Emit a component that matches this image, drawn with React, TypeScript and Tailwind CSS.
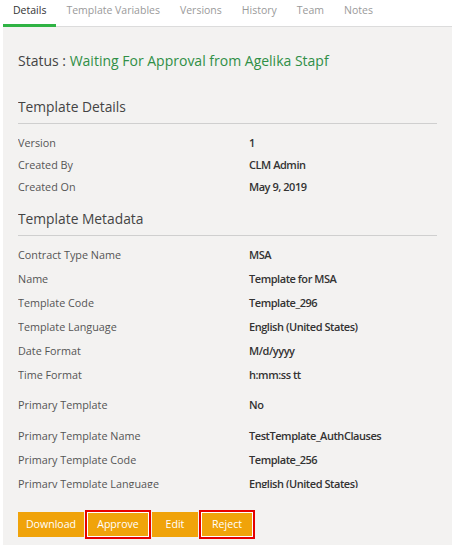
import React from 'react';

type Row = { label: string; value: string; tall?: boolean };

const tabs = ['Details', 'Template Variables', 'Versions', 'History', 'Team', 'Notes'];

const detailRows: Row[] = [
  { label: 'Version', value: '1' },
  { label: 'Created By', value: 'CLM Admin' },
  { label: 'Created On', value: 'May 9, 2019' },
];

const metaRows: Row[] = [
  { label: 'Contract Type Name', value: 'MSA' },
  { label: 'Name', value: 'Template for MSA' },
  { label: 'Template Code', value: 'Template_296' },
  { label: 'Template Language', value: 'English (United States)' },
  { label: 'Date Format', value: 'M/d/yyyy' },
  { label: 'Time Format', value: 'h:mm:ss tt' },
  { label: 'Primary Template', value: 'No', tall: true },
  { label: 'Primary Template Name', value: 'TestTemplate_AuthClauses' },
  { label: 'Primary Template Code', value: 'Template_256' },
  { label: 'Primary Template Language', value: 'English (United States)' },
];

function Heading({ title }: { title: string }) {
  return (
    <div className="-ml-[9px] -mr-[15px] pl-[9px] pb-[6px] border-b border-[#cfcfcf]">
      <div className="text-[13.8px] leading-[20px] text-[#444]">{title}</div>
    </div>
  );
}

function Rows({ rows, h }: { rows: Row[]; h: string }) {
  return (
    <div>
      {rows.map((r) => (
        <div key={r.label} className={`flex items-center ${r.tall ? 'h-[37px]' : h}`}>
          <div className="w-[231px] text-[10.8px] text-[#555]">{r.label}</div>
          <div className="text-[11px] tracking-[-0.45px] font-semibold text-[#333]">{r.value}</div>
        </div>
      ))}
    </div>
  );
}

export default function App() {
  const buttons = [
    { label: 'Download', w: 'w-[66px]', hl: false },
    { label: 'Approve', w: 'w-[62px]', hl: true },
    { label: 'Edit', w: 'w-[46px]', hl: false },
    { label: 'Reject', w: 'w-[52px]', hl: true },
  ];

  return (
    <div className="h-[545px] bg-white" style={{ fontFamily: '"Open Sans", "Noto Sans", sans-serif' }}>
      <div className="ml-[3px] w-[449px] h-full flex flex-col">
        <div className="flex h-[27px] border-b border-[#dcdcdc] shrink-0">
          {tabs.map((t, i) => (
            <div
              key={t}
              className={`px-[10px] pt-[2px] text-[10.5px] leading-[16px] ${
                i === 0 ? 'text-[#333] border-b-[3px] border-[#2fb344] -mb-px' : 'text-[#9a9a9a]'
              }`}
            >
              {t}
            </div>
          ))}
        </div>

        <div className="flex-1 bg-[#f3f2f1] px-[15px] flex flex-col">
          <div className="pt-[22px] text-[14px] leading-[24px] text-[#444]">
            Status : <span className="text-[#2f8f46]">Waiting For Approval from Agelika Stapf</span>
          </div>

          <div className="h-[415px] overflow-hidden">
            <div className="mt-[24px]">
              <Heading title="Template Details" />
            </div>
            <div className="pt-[8px]">
              <Rows rows={detailRows} h="h-[22px]" />
            </div>
            <div className="mt-[11px]">
              <Heading title="Template Metadata" />
            </div>
            <div className="pt-[7px]">
              <Rows rows={metaRows} h="h-[24px]" />
            </div>
          </div>

          <div className="mt-[24px] flex gap-[3px]">
            {buttons.map((b) => (
              <button
                key={b.label}
                className={`${b.w} h-[25px] bg-[#f0a30a] text-white text-[10.6px] ${
                  b.hl ? 'border border-white outline-2 outline-[#e60000]' : ''
                }`}
              >
                {b.label}
              </button>
            ))}
          </div>
        </div>
      </div>
    </div>
  );
}
